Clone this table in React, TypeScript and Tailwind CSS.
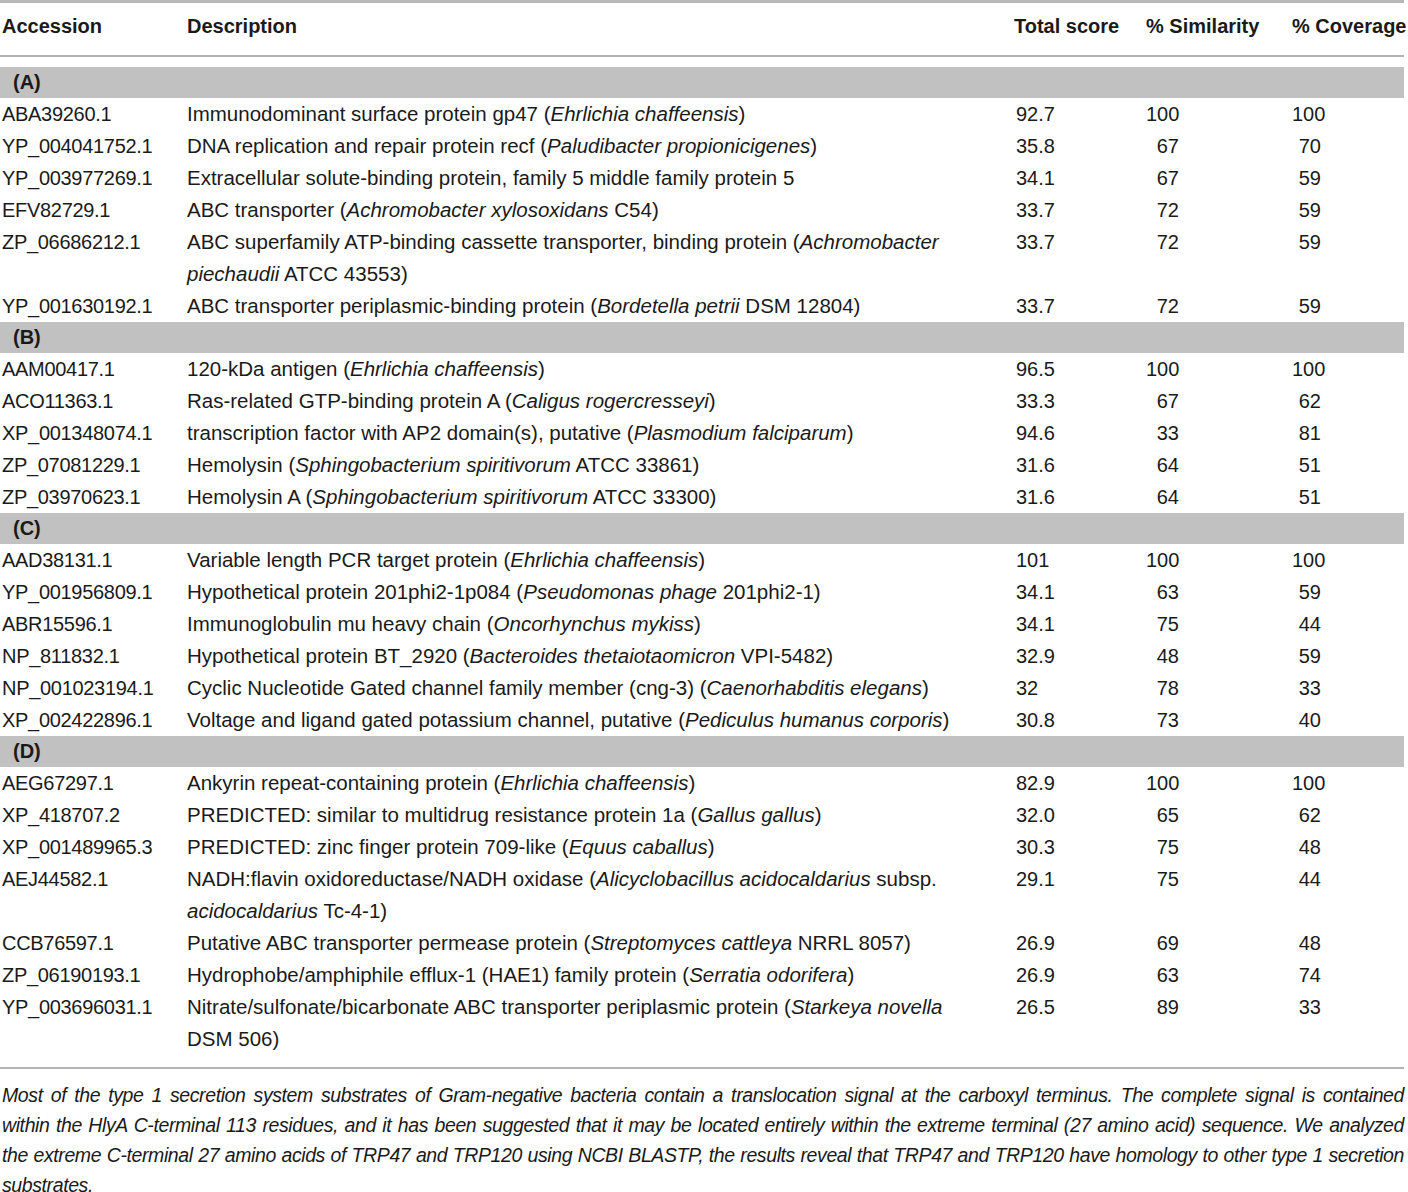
import type { ReactNode } from "react";

type Row = {
  acc: string;
  desc: ReactNode;
  score: string;
  sim: string;
  cov: string;
};

type Section = { label: string; rows: Row[] };

const SECTIONS: Section[] = [
  {
    label: "(A)",
    rows: [
      { acc: "ABA39260.1", desc: <>Immunodominant surface protein gp47 (<i>Ehrlichia chaffeensis</i>)</>, score: "92.7", sim: "100", cov: "100" },
      { acc: "YP_004041752.1", desc: <>DNA replication and repair protein recf (<i>Paludibacter propionicigenes</i>)</>, score: "35.8", sim: "67", cov: "70" },
      { acc: "YP_003977269.1", desc: <>Extracellular solute-binding protein, family 5 middle family protein 5</>, score: "34.1", sim: "67", cov: "59" },
      { acc: "EFV82729.1", desc: <>ABC transporter (<i>Achromobacter xylosoxidans</i> C54)</>, score: "33.7", sim: "72", cov: "59" },
      {
        acc: "ZP_06686212.1",
        desc: <>ABC superfamily ATP-binding cassette transporter, binding protein (<i>Achromobacter</i><br /><i>piechaudii</i> ATCC 43553)</>,
        score: "33.7", sim: "72", cov: "59",
      },
      { acc: "YP_001630192.1", desc: <>ABC transporter periplasmic-binding protein (<i>Bordetella petrii</i> DSM 12804)</>, score: "33.7", sim: "72", cov: "59" },
    ],
  },
  {
    label: "(B)",
    rows: [
      { acc: "AAM00417.1", desc: <>120-kDa antigen (<i>Ehrlichia chaffeensis</i>)</>, score: "96.5", sim: "100", cov: "100" },
      { acc: "ACO11363.1", desc: <>Ras-related GTP-binding protein A (<i>Caligus rogercresseyi</i>)</>, score: "33.3", sim: "67", cov: "62" },
      { acc: "XP_001348074.1", desc: <>transcription factor with AP2 domain(s), putative (<i>Plasmodium falciparum</i>)</>, score: "94.6", sim: "33", cov: "81" },
      { acc: "ZP_07081229.1", desc: <>Hemolysin (<i>Sphingobacterium spiritivorum</i> ATCC 33861)</>, score: "31.6", sim: "64", cov: "51" },
      { acc: "ZP_03970623.1", desc: <>Hemolysin A (<i>Sphingobacterium spiritivorum</i> ATCC 33300)</>, score: "31.6", sim: "64", cov: "51" },
    ],
  },
  {
    label: "(C)",
    rows: [
      { acc: "AAD38131.1", desc: <>Variable length PCR target protein (<i>Ehrlichia chaffeensis</i>)</>, score: "101", sim: "100", cov: "100" },
      { acc: "YP_001956809.1", desc: <>Hypothetical protein 201phi2-1p084 (<i>Pseudomonas phage</i> 201phi2-1)</>, score: "34.1", sim: "63", cov: "59" },
      { acc: "ABR15596.1", desc: <>Immunoglobulin mu heavy chain (<i>Oncorhynchus mykiss</i>)</>, score: "34.1", sim: "75", cov: "44" },
      { acc: "NP_811832.1", desc: <>Hypothetical protein BT_2920 (<i>Bacteroides thetaiotaomicron</i> VPI-5482)</>, score: "32.9", sim: "48", cov: "59" },
      { acc: "NP_001023194.1", desc: <>Cyclic Nucleotide Gated channel family member (cng-3) (<i>Caenorhabditis elegans</i>)</>, score: "32", sim: "78", cov: "33" },
      { acc: "XP_002422896.1", desc: <>Voltage and ligand gated potassium channel, putative (<i>Pediculus humanus corporis</i>)</>, score: "30.8", sim: "73", cov: "40" },
    ],
  },
  {
    label: "(D)",
    rows: [
      { acc: "AEG67297.1", desc: <>Ankyrin repeat-containing protein (<i>Ehrlichia chaffeensis</i>)</>, score: "82.9", sim: "100", cov: "100" },
      { acc: "XP_418707.2", desc: <>PREDICTED: similar to multidrug resistance protein 1a (<i>Gallus gallus</i>)</>, score: "32.0", sim: "65", cov: "62" },
      { acc: "XP_001489965.3", desc: <>PREDICTED: zinc finger protein 709-like (<i>Equus caballus</i>)</>, score: "30.3", sim: "75", cov: "48" },
      {
        acc: "AEJ44582.1",
        desc: <>NADH:flavin oxidoreductase/NADH oxidase (<i>Alicyclobacillus acidocaldarius</i> subsp.<br /><i>acidocaldarius</i> Tc-4-1)</>,
        score: "29.1", sim: "75", cov: "44",
      },
      { acc: "CCB76597.1", desc: <>Putative ABC transporter permease protein (<i>Streptomyces cattleya</i> NRRL 8057)</>, score: "26.9", sim: "69", cov: "48" },
      { acc: "ZP_06190193.1", desc: <>Hydrophobe/amphiphile efflux-1 (HAE1) family protein (<i>Serratia odorifera</i>)</>, score: "26.9", sim: "63", cov: "74" },
      {
        acc: "YP_003696031.1",
        desc: <>Nitrate/sulfonate/bicarbonate ABC transporter periplasmic protein (<i>Starkeya novella</i><br />DSM 506)</>,
        score: "26.5", sim: "89", cov: "33",
      },
    ],
  },
];

const FOOTNOTE = [
  "Most of the type 1 secretion system substrates of Gram-negative bacteria contain a translocation signal at the carboxyl terminus. The complete signal is contained",
  "within the HlyA C-terminal 113 residues, and it has been suggested that it may be located entirely within the extreme terminal (27 amino acid) sequence. We analyzed",
  "the extreme C-terminal 27 amino acids of TRP47 and TRP120 using NCBI BLASTP, the results reveal that TRP47 and TRP120 have homology to other type 1 secretion",
];

const COLS = "grid grid-cols-[187px_827px_132px_146px_1fr]";

function DataRow({ row }: { row: Row }) {
  return (
    <div className={`${COLS} leading-[32px]`}>
      <div className="pl-[2px] tracking-[-0.3px]">{row.acc}</div>
      <div className="text-[20.5px] whitespace-nowrap">{row.desc}</div>
      <div className="pl-[2px]">{row.score}</div>
      <div className="pr-[113px] text-right">{row.sim}</div>
      <div className="pr-[83px] text-right">{row.cov}</div>
    </div>
  );
}

export default function App() {
  return (
    <div className="h-[1192px] w-[1408px] overflow-hidden bg-white font-['Liberation_Sans',Arial,sans-serif] text-[20px] text-[#1a1a1a]">
      <div className="w-[1404px]">
        <div className="h-[3px] bg-[#b8b8b8]" />
        <div className={`${COLS} h-[52px] items-center whitespace-nowrap pb-[6px] font-bold`}>
          <div className="pl-[2px]">Accession</div>
          <div>Description</div>
          <div>Total score</div>
          <div>% Similarity</div>
          <div>% Coverage</div>
        </div>
        <div className="h-[2px] bg-[#b4b4b4]" />
        <div className="h-[10px]" />
        {SECTIONS.map((s) => (
          <div key={s.label}>
            <div className="h-[31px] bg-[#c1c1c1] pl-[13px] font-bold leading-[31px]">{s.label}</div>
            {s.rows.map((r) => (
              <DataRow key={r.acc} row={r} />
            ))}
          </div>
        ))}
        <div className="h-[12px]" />
        <div className="h-[2px] bg-[#b4b4b4]" />
        <div className="pt-[11px] pl-[2px] text-[19.5px] italic leading-[30px] tracking-[-0.4px]">
          {FOOTNOTE.map((line) => (
            <div key={line} className="whitespace-nowrap text-justify [text-align-last:justify]">
              {line}
            </div>
          ))}
          <div>substrates.</div>
        </div>
      </div>
    </div>
  );
}
